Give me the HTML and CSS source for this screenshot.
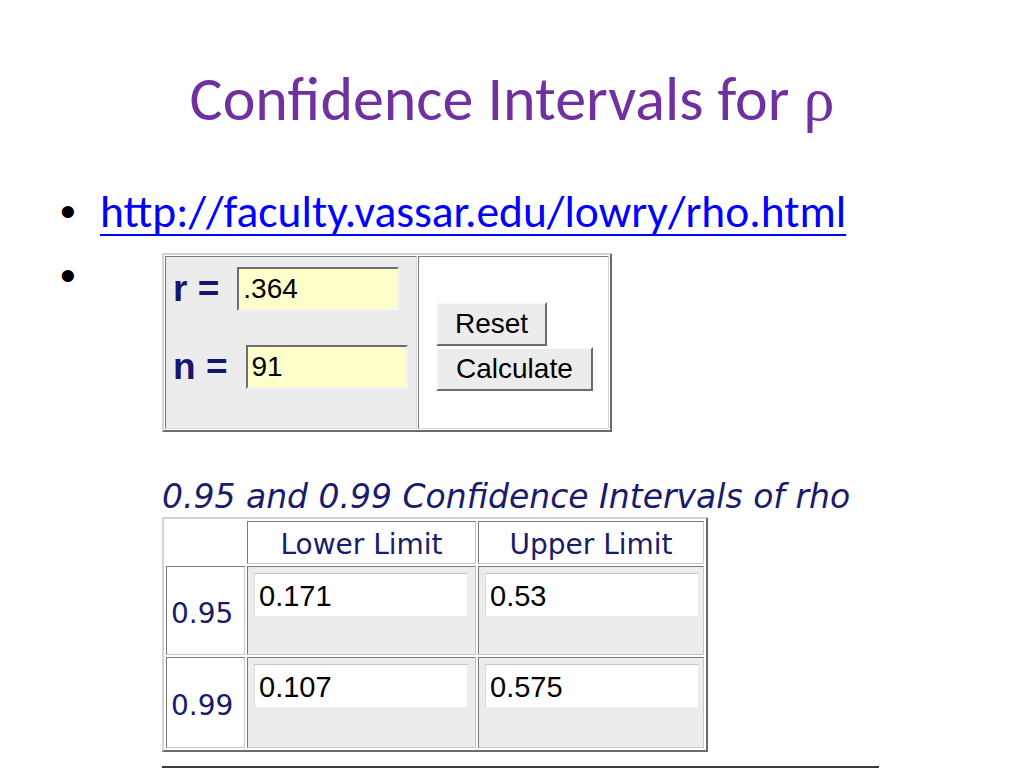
FILE: index.html
```html
<!DOCTYPE html>
<html lang="en">

<head>
  <meta charset="UTF-8">
  <title>Confidence Intervals for rho</title>
  <link rel="stylesheet" href="styles.css">
</head>

<body>
  <div class="slide">
    <h1 class="slide-title">Confidence Intervals for <span class="rho">ρ</span></h1>

    <ul class="bullets">
      <li class="bullet-item">
        <span class="bullet-mark">•</span>
        <a class="bullet-link" href="#">http://faculty.vassar.edu/lowry/rho.html</a>
      </li>
      <li class="bullet-item bullet-shot">
        <span class="bullet-mark">•</span>
        <div class="shot">
          <table class="calc">
            <tr>
              <td class="calc-fields">
                <div class="field">
                  <label class="field-label">r =</label>
                  <input class="field-input" type="text" value=".364">
                </div>
                <div class="field">
                  <label class="field-label">n =</label>
                  <input class="field-input" type="text" value="91">
                </div>
              </td>
              <td class="calc-actions">
                <button class="btn">Reset</button>
                <button class="btn btn-wide">Calculate</button>
              </td>
            </tr>
          </table>

          <h2 class="results-title">0.95 and 0.99 Confidence Intervals of rho</h2>

          <table class="results">
            <colgroup>
              <col class="col-level">
              <col class="col-lower">
              <col class="col-upper">
            </colgroup>
            <tr class="results-head">
              <td class="cell-empty"></td>
              <td class="cell-head">Lower Limit</td>
              <td class="cell-head">Upper Limit</td>
            </tr>
            <tr class="results-row">
              <td class="cell-level">0.95</td>
              <td class="cell-value"><input class="value-box" type="text" value="0.171"></td>
              <td class="cell-value"><input class="value-box" type="text" value="0.53"></td>
            </tr>
            <tr class="results-row results-row-last">
              <td class="cell-level">0.99</td>
              <td class="cell-value"><input class="value-box" type="text" value="0.107"></td>
              <td class="cell-value"><input class="value-box" type="text" value="0.575"></td>
            </tr>
          </table>

          <div class="rule"></div>
        </div>
      </li>
    </ul>
  </div>
</body>

</html>
```

FILE: styles.css
```css
* {
  box-sizing: border-box;
}

body {
  margin: 0;
  background: #fff;
}

.slide {
  width: 1024px;
  height: 768px;
  overflow: hidden;
  background: #fff;
  font-family: Carlito, Lato, 'Liberation Sans', sans-serif;
}

.slide-title {
  margin: 0;
  padding-top: 62px;
  font-size: 62px;
  line-height: 74px;
  font-weight: normal;
  color: #7030a0;
  text-align: center;
}

.rho {
  font-family: 'Liberation Serif', serif;
}

.bullets {
  list-style: none;
  margin: 49px 0 0;
  padding: 0 0 0 60px;
}

.bullet-item {
  display: flex;
  align-items: flex-start;
  font-size: 45.5px;
  line-height: 54px;
}

.bullet-shot {
  margin-top: 10px;
}

.bullet-mark {
  flex: 0 0 40px;
  font-family: 'Liberation Sans', Arial, sans-serif;
  font-size: 45px;
  color: #000;
}

.bullet-link {
  color: #0000ff;
  text-decoration: underline;
  text-decoration-thickness: 2px;
  text-underline-offset: 7px;
}

.shot {
  display: flex;
  flex-direction: column;
  margin: 4px 0 0 62px;
  font-family: 'Liberation Sans', Arial, sans-serif;
  line-height: normal;
}

/* formulario r / n */
.calc {
  width: 450px;
  height: 179px;
  border-collapse: separate;
  border-spacing: 1px;
  border: 2px solid;
  border-color: #d4d4d4 #6c6c6c #6c6c6c #d4d4d4;
}

.calc td {
  border: 1px solid;
  border-color: #7a7a7a #d8d8d8 #d8d8d8 #7a7a7a;
  padding: 0;
}

.calc-fields {
  width: 252px;
  background: #ececec;
  vertical-align: top;
  padding: 10px 0 0 7px !important;
}

.field {
  display: flex;
  align-items: center;
  margin-bottom: 34px;
}

.field-label {
  font-size: 37px;
  line-height: 40px;
  font-weight: bold;
  color: #16166e;
  margin-right: 18px;
}

.field-input {
  width: 162px;
  height: 44px;
  margin: 0;
  padding: 0 0 0 4px;
  border: 2px solid;
  border-color: #6e6e6e #f2f2f2 #f2f2f2 #6e6e6e;
  background: #ffffcc;
  font-family: 'Liberation Sans', Arial, sans-serif;
  font-size: 28px;
  color: #000;
}

.calc-actions {
  background: #fff;
  vertical-align: middle;
  padding: 9px 0 0 17px !important;
}

.btn {
  display: block;
  height: 44px;
  margin: 0 0 1px;
  padding: 0 17px;
  border: 2px solid;
  border-color: #fafafa #6c6c6c #6c6c6c #fafafa;
  background: #ececec;
  font-family: 'Liberation Sans', Arial, sans-serif;
  font-size: 28px;
  color: #000;
}

.btn-wide {
  padding: 0 18px;
}

/* tabela de resultados */
.results-title {
  margin: 45px 0 0;
  font-family: 'DejaVu Sans', Verdana, sans-serif;
  font-style: italic;
  font-weight: normal;
  font-size: 33px;
  line-height: 40px;
  color: #1b1b6c;
  white-space: nowrap;
}

.results {
  width: 546px;
  margin-top: 0;
  table-layout: fixed;
  border-collapse: separate;
  border-spacing: 2px;
  border: 2px solid;
  border-color: #d4d4d4 #6c6c6c #6c6c6c #d4d4d4;
}

.col-level {
  width: 79px;
}

.col-lower {
  width: 229px;
}

.col-upper {
  width: 226px;
}

.results td {
  border: 1px solid;
  border-color: #7a7a7a #c8c8c8 #c8c8c8 #7a7a7a;
  padding: 0;
}

.results .cell-empty {
  border: none;
}

.results-head {
  height: 43px;
}

.cell-head {
  background: #fff;
  text-align: center;
  font-family: 'DejaVu Sans', Verdana, sans-serif;
  font-size: 28px;
  color: #1b1b6c;
  padding-top: 4px !important;
}

.results-row {
  height: 89px;
}

.results-row-last {
  height: 91px;
}

.cell-level {
  background: #fff;
  padding-left: 4px !important;
  font-family: 'DejaVu Sans', Verdana, sans-serif;
  font-size: 28px;
  color: #1b1b6c;
  vertical-align: middle;
  padding-top: 6px !important;
}

.cell-value {
  background: #ececec;
  vertical-align: top;
  padding: 6px 0 0 6px !important;
}

.value-box {
  display: block;
  width: 214px;
  height: 44px;
  margin: 0;
  padding: 2px 0 0 4px;
  border: 1px solid;
  border-color: #c6c6c6 #ececec #ececec #dcdcdc;
  background: #fff;
  font-family: 'Liberation Sans', Arial, sans-serif;
  font-size: 29px;
  color: #000;
}

.rule {
  width: 717px;
  height: 2px;
  margin-top: 14px;
  background: #3c3c3c;
}
```
